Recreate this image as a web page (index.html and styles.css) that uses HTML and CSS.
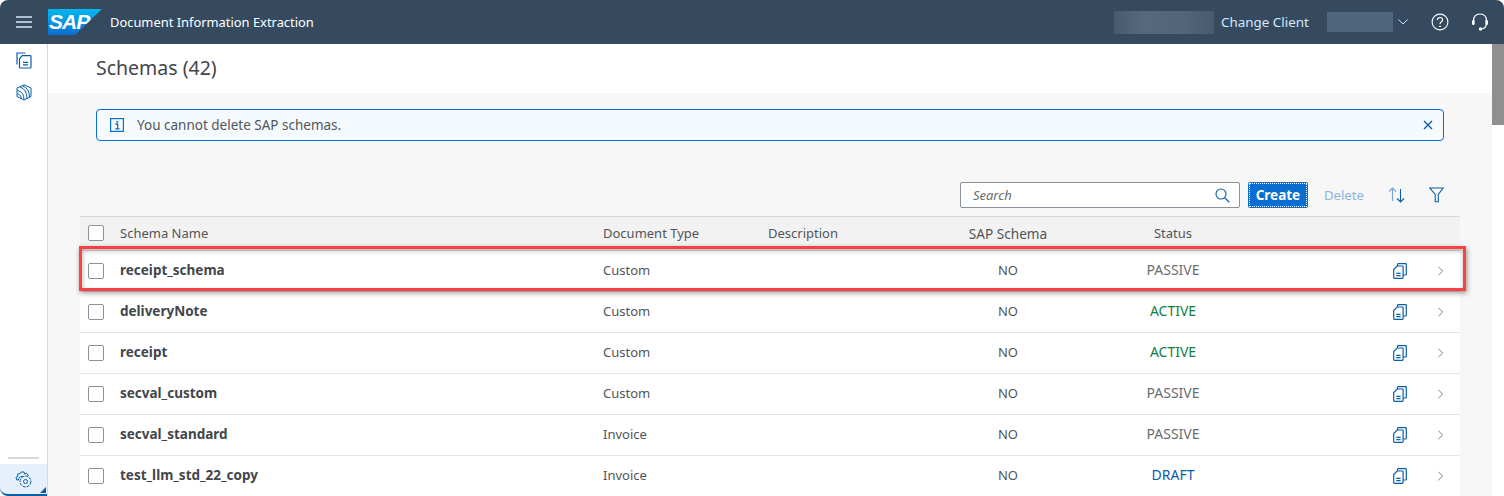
FILE: index.html
```html
<!DOCTYPE html>
<html>
    <head>
        <title>Document Information Extraction</title>
        <link rel="stylesheet" href="styles.css">
    </head>
    <body>
        <svg class="defs" width="0" height="0">
            <symbol id="copy" viewBox="0 0 14 16">
                <path d="M4.5 2.8 V1.4 Q4.5 .7 5.2 .7 H12.6 Q13.3 .7 13.3 1.4 V11.3 Q13.3 12 12.6 12 H10.4 M4.2 3 H9.3 Q10.1 3 10.1 3.8 V14.5 Q10.1 15.3 9.3 15.3 H1.5 Q.7 15.3 .7 14.5 V6.5 Z M3.3 10.3 H7.6 M3.3 12.6 H7.6" fill="none" stroke="#0a5ea8" stroke-width="1.2"/>
            </symbol>
            <symbol id="chevron" viewBox="0 0 8 12">
                <path d="M1.5 1 L6.5 6 L1.5 11" fill="none" stroke="#7d7d7d" stroke-width="1.2"/>
            </symbol>
        </svg>

        <header class="shell">
            <svg class="menu" width="16" height="12" viewBox="0 0 16 12">
                <path d="M0 1 H16 M0 6 H16 M0 11 H16" stroke="#d7e6f5" stroke-width="1.6"/>
            </svg>
            <div class="logo"><span>SAP</span></div>
            <div class="app-title">Document Information Extraction</div>
            <div class="blur blur-user"></div>
            <div class="change-client">Change Client</div>
            <div class="blur blur-client"></div>
            <svg class="caret" width="10" height="6" viewBox="0 0 10 6">
                <path d="M.5 .5 L5 5 L9.5 .5" fill="none" stroke="#d1e8ff" stroke-width="1"/>
            </svg>
            <svg class="help" width="18" height="18" viewBox="0 0 18 18">
                <circle cx="9" cy="9" r="7.9" fill="none" stroke="#fff" stroke-width="1.1"/>
                <path d="M6.4 7 Q6.4 4.5 9 4.5 Q11.6 4.5 11.6 6.8 Q11.6 8 10.2 8.9 Q9 9.7 9 11" fill="none" stroke="#fff" stroke-width="1.2"/>
                <circle cx="9" cy="13.3" r=".9" fill="#fff"/>
            </svg>
            <svg class="support" width="18" height="18" viewBox="0 0 18 18">
                <path d="M2.5 10 V8 Q2.5 1 9 1 Q15.5 1 15.5 8 V10 Q15.5 15 11 16" fill="none" stroke="#fff" stroke-width="1.2"/>
                <rect x="1" y="7" width="2.6" height="5" rx="1.2" fill="#fff"/>
                <rect x="14.4" y="7" width="2.6" height="5" rx="1.2" fill="#fff"/>
                <circle cx="9.5" cy="16" r="1.7" fill="#fff"/>
            </svg>
        </header>

        <div class="layout">
            <nav class="side">
                <div class="side-top">
                    <svg width="16" height="17" viewBox="0 0 16 17">
                        <path d="M1 12.5 V1 H9.5 M6.3 3.7 H14.2 Q15 3.7 15 4.5 V15.2 Q15 16 14.2 16 H4.3 Q3.5 16 3.5 15.2 V6.8 Z M7 10.3 H12 M7 12.8 H12" fill="none" stroke="#0a5ea8" stroke-width="1.2"/>
                    </svg>
                    <svg width="16" height="17" viewBox="0 0 16 17">
                        <path d="M8 .8 L15 4 V12.5 L8 16 L1 12.5 V4 Z M4 3 Q11 5 11 15 M6.5 2 Q13.5 4 13.5 13.5 M1.5 6.5 Q8 8 8 15.5 M1.5 9.5 Q5.5 11 5.5 15" fill="none" stroke="#0a5ea8" stroke-width="1"/>
                    </svg>
                </div>
                <div class="side-bottom">
                    <div class="side-rule"></div>
                    <div class="side-item">
                        <svg width="17" height="17" viewBox="0 0 17 17">
                            <path d="M6 1 H9 L9.6 3 L11.6 2.3 L13.2 4.2 L12 6 H9 A3.6 3.6 0 0 0 3.4 9 L1.8 9 L1 6.2 L2.8 5.4 L2.5 3.2 L5 2.6 Z" fill="none" stroke="#0a5ea8" stroke-width="1"/>
                            <circle cx="10.5" cy="10.5" r="5.4" fill="#e5f0fa" stroke="#0a5ea8" stroke-width="1" stroke-dasharray="3 1"/>
                            <circle cx="10.5" cy="10.5" r="2" fill="none" stroke="#0a5ea8" stroke-width="1"/>
                        </svg>
                        <span class="corner"></span>
                    </div>
                </div>
            </nav>

            <main class="content">
                <div class="title-bar">Schemas (42)</div>

                <div class="strip">
                    <svg width="14" height="14" viewBox="0 0 14 14">
                        <rect x=".6" y=".6" width="12.8" height="12.8" fill="none" stroke="#0a6ed1" stroke-width="1.2"/>
                        <path d="M5.5 6 H7.6 V10.6 M5.2 10.8 H9.6" fill="none" stroke="#0a6ed1" stroke-width="1.3"/>
                        <rect x="6.4" y="3" width="1.6" height="1.6" fill="#0a6ed1"/>
                    </svg>
                    <span class="strip-text">You cannot delete SAP schemas.</span>
                    <svg class="strip-close" width="10" height="10" viewBox="0 0 10 10">
                        <path d="M1 1 L9 9 M9 1 L1 9" stroke="#0a5ea8" stroke-width="1.4"/>
                    </svg>
                </div>

                <section class="panel">
                    <div class="toolbar">
                        <div class="search">
                            <span>Search</span>
                            <svg width="15" height="15" viewBox="0 0 15 15">
                                <circle cx="6" cy="6" r="5" fill="none" stroke="#0a5ea8" stroke-width="1.1"/>
                                <path d="M9.6 9.6 L14.3 14.3" stroke="#0a5ea8" stroke-width="1.3"/>
                            </svg>
                        </div>
                        <div class="btn-create"><span>Create</span></div>
                        <div class="btn-delete">Delete</div>
                        <svg class="tool-sort" width="17" height="16" viewBox="0 0 17 16">
                            <path d="M4.5 14 V1 M1 4.5 L4.5 1 L8 4.5" fill="none" stroke="#7aa6d6" stroke-width="1.2"/>
                            <path d="M12.5 2 V15 M9 11.5 L12.5 15 L16 11.5" fill="none" stroke="#0a5ea8" stroke-width="1.1"/>
                        </svg>
                        <svg class="tool-filter" width="15" height="16" viewBox="0 0 15 16">
                            <path d="M.8 1 H14.2 L9.3 7.5 V14.8 H6.2 V7.5 Z" fill="none" stroke="#0a5ea8" stroke-width="1.1"/>
                        </svg>
                    </div>

                    <div class="row head">
                        <span class="check"></span>
                        <span>Schema Name</span>
                        <span>Document Type</span>
                        <span>Description</span>
                        <span class="mid wide">SAP Schema</span>
                        <span class="mid status-head">Status</span>
                    </div>
                    <div class="row">
                        <span class="check"></span>
                        <span class="name">receipt_schema</span>
                        <span>Custom</span>
                        <span></span>
                        <span class="mid">NO</span>
                        <span class="mid state passive">PASSIVE</span>
                        <svg class="copy"><use href="#copy"/></svg>
                        <svg class="chev"><use href="#chevron"/></svg>
                    </div>
                    <div class="row">
                        <span class="check"></span>
                        <span class="name">deliveryNote</span>
                        <span>Custom</span>
                        <span></span>
                        <span class="mid">NO</span>
                        <span class="mid state active">ACTIVE</span>
                        <svg class="copy"><use href="#copy"/></svg>
                        <svg class="chev"><use href="#chevron"/></svg>
                    </div>
                    <div class="row">
                        <span class="check"></span>
                        <span class="name">receipt</span>
                        <span>Custom</span>
                        <span></span>
                        <span class="mid">NO</span>
                        <span class="mid state active">ACTIVE</span>
                        <svg class="copy"><use href="#copy"/></svg>
                        <svg class="chev"><use href="#chevron"/></svg>
                    </div>
                    <div class="row">
                        <span class="check"></span>
                        <span class="name">secval_custom</span>
                        <span>Custom</span>
                        <span></span>
                        <span class="mid">NO</span>
                        <span class="mid state passive">PASSIVE</span>
                        <svg class="copy"><use href="#copy"/></svg>
                        <svg class="chev"><use href="#chevron"/></svg>
                    </div>
                    <div class="row">
                        <span class="check"></span>
                        <span class="name">secval_standard</span>
                        <span>Invoice</span>
                        <span></span>
                        <span class="mid">NO</span>
                        <span class="mid state passive">PASSIVE</span>
                        <svg class="copy"><use href="#copy"/></svg>
                        <svg class="chev"><use href="#chevron"/></svg>
                    </div>
                    <div class="row">
                        <span class="check"></span>
                        <span class="name">test_llm_std_22_copy</span>
                        <span>Invoice</span>
                        <span></span>
                        <span class="mid">NO</span>
                        <span class="mid state draft">DRAFT</span>
                        <svg class="copy"><use href="#copy"/></svg>
                        <svg class="chev"><use href="#chevron"/></svg>
                    </div>
                </section>

                <div class="highlight"></div>
            </main>

            <div class="scrollbar"><div class="thumb"></div></div>
        </div>
    </body>
</html>
```

FILE: styles.css
```css
html, body {
    height: 100%;
}
body {
    margin: 0;
    height: 496px;
    overflow: hidden;
    background: #fff;
    font-family: "Noto Sans", "Open Sans", sans-serif;
    font-size: 14px;
    color: #32363a;
}
.defs {
    position: absolute;
}

/* shell bar */
.shell {
    display: flex;
    align-items: center;
    height: 44px;
    padding: 0 0 0 16px;
    background: #354a5f;
    border-radius: 8px 8px 0 0;
    color: #fff;
}
.menu {
    margin-right: 16px;
}
.logo {
    position: relative;
    width: 54px;
    height: 26px;
    margin-right: 8px;
    background: linear-gradient(180deg, #00b8f1, #0a6ed1);
    clip-path: polygon(0 0, 100% 0, 50% 100%, 0 100%);
}
.logo span {
    display: block;
    padding-left: 1px;
    font-family: "Liberation Sans", sans-serif;
    font-size: 21px;
    font-weight: bold;
    font-style: italic;
    line-height: 26px;
    letter-spacing: -1px;
    color: #fff;
}
.app-title {
    font-size: 12.9px;
    flex: 1;
}
.blur {
    background: #4f6377;
}
.blur-user {
    width: 100px;
    height: 23px;
    margin-right: 7px;
    background: linear-gradient(90deg, #465b70, #57697c 30%, #526679 70%, #465b70);
}
.change-client {
    width: 106px;
    font-size: 13.4px;
    color: #d1e8ff;
}
.blur-client {
    width: 66px;
    height: 20px;
    margin-right: 5px;
    background: #4f657b;
}
.caret {
    margin-right: 23px;
}
.help {
    margin-right: 22px;
}
.support {
    margin-right: 15px;
}

/* main frame */
.layout {
    display: flex;
    height: 452px;
}
.side {
    display: flex;
    flex-direction: column;
    justify-content: space-between;
    flex: none;
    width: 47px;
    border-right: 1px solid #d9d9d9;
    background: #fff;
}
.side-top {
    display: flex;
    flex-direction: column;
    align-items: center;
    gap: 15px;
    padding-top: 8px;
}
.side-rule {
    height: 2px;
    margin: 0 8px 5px;
    background: #d9d9d9;
}
.side-item {
    position: relative;
    display: flex;
    align-items: center;
    justify-content: center;
    height: 30px;
    background: #e5f0fa;
    border-bottom: 2px solid #0a5ea8;
    border-radius: 0 0 0 8px;
}
.corner {
    position: absolute;
    right: 1px;
    bottom: 1px;
    border-left: 6px solid transparent;
    border-bottom: 6px solid #0a5ea8;
}
.content {
    position: relative;
    flex: 1;
    background: #f7f7f7;
}
.title-bar {
    height: 49px;
    padding-left: 48px;
    background: #fff;
    font-size: 19.5px;
    line-height: 48px;
    color: #42464b;
}
.strip {
    display: flex;
    align-items: center;
    height: 30px;
    margin: 16px 48px 0 48px;
    padding: 0 10px 0 13px;
    border: 1px solid #0a6ed1;
    border-radius: 4px;
    background: #f5faff;
}
.strip-text {
    flex: 1;
    margin-left: 13px;
    font-size: 13.5px;
    color: #51555a;
}
.panel {
    margin: 41px 32px 0 32px;
}
.toolbar {
    display: flex;
    align-items: center;
    justify-content: flex-end;
    height: 26px;
    padding-bottom: 8px;
    border-bottom: 1px solid #d9d9d9;
}
.search {
    display: flex;
    align-items: center;
    justify-content: space-between;
    box-sizing: border-box;
    width: 280px;
    height: 26px;
    margin-right: 8px;
    padding: 0 9px 0 12px;
    border: 1px solid #89919a;
    border-radius: 2px;
    background: #fff;
    font-size: 13px;
    font-style: italic;
    color: #6a6d70;
}
.btn-create {
    box-sizing: border-box;
    width: 60px;
    height: 26px;
    padding: 1px;
    border-radius: 2px;
    background: #0a6ed1;
    font-size: 13.5px;
    font-weight: bold;
    color: #fff;
    text-align: center;
}
.btn-create span {
    display: block;
    height: 22px;
    border: 1px dotted #fff;
    line-height: 22px;
}
.btn-delete {
    margin-left: 16px;
    font-size: 13.2px;
    color: #8cb4dd;
}
.tool-sort {
    margin-left: 24px;
}
.tool-filter {
    margin: 0 16px 0 24px;
}
.row {
    display: grid;
    grid-template-columns: 40px 483px 165px 180px 120px 210px 102px 40px 40px;
    align-items: center;
    height: 38px;
    padding-bottom: 2px;
    border-bottom: 1px solid #e5e5e5;
    background: #fff;
    font-size: 13px;
    color: #51555a;
}
.row.head {
    height: 32px;
    padding-bottom: 1px;
    border-bottom: 1px solid #d9d9d9;
    background: #f2f2f2;
    color: #51555a;
}
.check {
    box-sizing: border-box;
    width: 16px;
    height: 16px;
    margin: 2px 0 0 8px;
    border: 1px solid #89919a;
    border-radius: 2px;
    background: #fff;
}
.row.head .check {
    margin-top: 0;
}
.name {
    font-size: 13.5px;
    font-weight: bold;
    color: #42464b;
}
.mid {
    text-align: center;
}
.wide {
    font-size: 13.6px;
}
.state {
    margin-bottom: 2px;
    font-size: 14px;
}
.passive {
    color: #6a6d70;
}
.active {
    color: #107e3e;
}
.draft {
    color: #0a5ea8;
}
.copy {
    grid-column: 8;
    justify-self: center;
    width: 14px;
    height: 16px;
    margin-top: 2px;
}
.chev {
    grid-column: 9;
    justify-self: center;
    width: 7px;
    height: 10px;
    margin-top: 1px;
}

/* annotation drawn over the first row */
.highlight {
    position: absolute;
    top: 202px;
    left: 31px;
    width: 1381px;
    height: 39px;
    border: 3px solid #fc4046;
    box-shadow: 1px 2px 5px rgba(0, 0, 0, 0.4), inset 1px 2px 4px rgba(0, 0, 0, 0.25);
}

.scrollbar {
    flex: none;
    width: 12px;
    background: #fff;
}
.thumb {
    height: 81px;
    background: #8f8f8f;
}
```
